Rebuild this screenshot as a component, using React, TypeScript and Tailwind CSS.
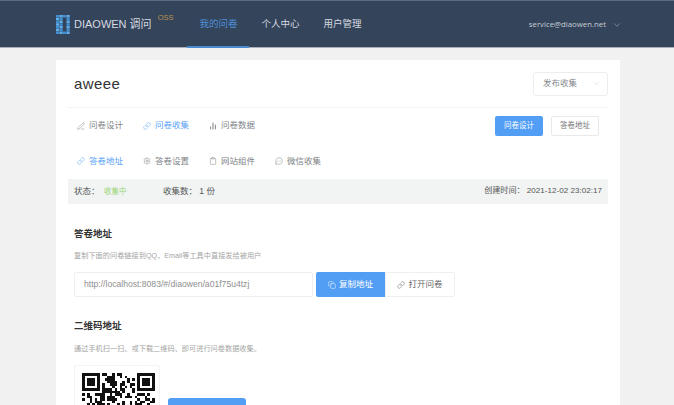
import type { ReactNode } from "react";
import { ChevronDown, Copy, Link, Settings, MessageCircleMore, Clipboard, BarChart2, PenLine } from "lucide-react";

const FONT = "font-['Liberation_Sans','Noto_Sans_CJK_SC',sans-serif]";

// finder pattern positions are fixed, the rest is a deterministic speckle
const QR_SIZE = 29;
function qrCell(x: number, y: number) {
  const inFinder = (fx: number, fy: number) => x >= fx && x < fx + 7 && y >= fy && y < fy + 7;
  const finder = (fx: number, fy: number) => {
    const dx = x - fx;
    const dy = y - fy;
    if (dx === 0 || dx === 6 || dy === 0 || dy === 6) return true;
    return dx >= 2 && dx <= 4 && dy >= 2 && dy <= 4;
  };
  if (inFinder(0, 0)) return finder(0, 0);
  if (inFinder(QR_SIZE - 7, 0)) return finder(QR_SIZE - 7, 0);
  if (inFinder(0, QR_SIZE - 7)) return finder(0, QR_SIZE - 7);
  if (x === 7 && y < 8) return false;
  if (y === 7 && x < 8) return false;
  if (x === QR_SIZE - 8 && y < 8) return false;
  if (y === 7 && x >= QR_SIZE - 8) return false;
  return ((x * 7 + y * 13 + x * y * 3) ^ (x * x + y)) % 5 < 2;
}

function QrCode() {
  const cells: { x: number; y: number }[] = [];
  for (let y = 0; y < QR_SIZE; y++) {
    for (let x = 0; x < QR_SIZE; x++) {
      if (qrCell(x, y)) cells.push({ x, y });
    }
  }
  return (
    <svg width="73" height="73" viewBox={`0 0 ${QR_SIZE} ${QR_SIZE}`} shapeRendering="crispEdges">
      {cells.map((c) => (
        <rect key={`${c.x}-${c.y}`} x={c.x} y={c.y} width="1" height="1" fill="#111" />
      ))}
    </svg>
  );
}

function Logo() {
  const blocks = [
    [0, 0], [1, 0], [2, 0], [3, 0],
    [0, 1], [1, 1], [3, 1],
    [0, 2], [1, 2], [3, 2],
    [0, 3], [1, 3], [3, 3],
    [0, 4], [1, 4], [3, 4],
    [0, 5], [1, 5], [3, 5],
    [0, 6], [1, 6], [2, 6], [3, 6],
  ];
  return (
    <svg width="14" height="19" viewBox="0 0 14 19">
      {blocks.map(([x, y]) => (
        <rect key={`${x}-${y}`} x={x * 3.5} y={y * 2.75} width="3.2" height="2.5" fill={(x + y) % 2 ? "#63ade8" : "#3f90d6"} />
      ))}
    </svg>
  );
}

function NavTab({ label, active }: { label: string; active?: boolean }) {
  return (
    <div
      className={`flex h-[47px] w-[62px] items-center justify-center border-b-2 pt-[2px] text-[9.5px] ${
        active ? "border-[#4a8bd0] text-[#4f8fd8]" : "border-transparent text-[#d5dae0]"
      }`}
    >
      {label}
    </div>
  );
}

function TabItem({ icon, label, active }: { icon: ReactNode; label: string; active?: boolean }) {
  return (
    <div className={`flex items-center gap-[4px] text-[8.5px] ${active ? "text-[#5ba3f5]" : "text-[#808488]"}`}>
      {icon}
      <span>{label}</span>
    </div>
  );
}

export default function App() {
  return (
    <div className={`${FONT} h-[405px] w-[674px] overflow-hidden bg-[#f1f1f1]`}>
      <header className="flex h-[48px] items-start border-t border-b border-t-[#5d6b7e] border-b-[#aab0b8] bg-[#34445a] pl-[56px] pr-[52px]">
        <div className="flex h-[46px] items-center gap-[4px]">
          <Logo />
          <span className="text-[11px] text-[#d5dae0]">DIAOWEN 调问</span>
          <span className="mb-[12px] ml-[2px] text-[7.5px] text-[#b98f4e]">OSS</span>
        </div>
        <nav className="ml-[14px] flex">
          <NavTab label="我的问卷" active />
          <NavTab label="个人中心" />
          <NavTab label="用户管理" />
        </nav>
        <div className="ml-auto flex h-[46px] items-center gap-[6px] pt-[2px] font-['Open_Sans','Noto_Sans_CJK_SC',sans-serif] text-[7.8px] text-[#c6ccd4]">
          service@diaowen.net
          <ChevronDown size={10} strokeWidth={1.2} />
        </div>
      </header>

      <main className="ml-[56px] mt-[12px] h-[400px] w-[564px] bg-white px-[12px]">
        <div className="flex h-[48px] items-center justify-between border-b border-[#f3f3f3] pl-[6px]">
          <h1 className="pt-[2px] text-[15px] tracking-[0.4px] text-[#333]">aweee</h1>
          <div className="flex h-[24px] w-[75px] items-center justify-between rounded-[3px] border border-[#ededed] pl-[9px] pr-[6px] text-[8.5px] text-[#85898e]">
            发布收集
            <ChevronDown size={9} strokeWidth={1.2} className="text-[#c0c4cc]" />
          </div>
        </div>

        <div className="flex h-[35px] items-center justify-between pl-[9px] pr-[9px]">
          <div className="flex items-center gap-[20px]">
            <TabItem icon={<PenLine size={8} strokeWidth={1.5} />} label="问卷设计" />
            <TabItem icon={<Link size={8} strokeWidth={1.5} />} label="问卷收集" active />
            <TabItem icon={<BarChart2 size={8} strokeWidth={3} />} label="问卷数据" />
          </div>
          <div className="flex items-center gap-[8px] text-[7.5px]">
            <button className="flex h-[20px] w-[48px] items-center justify-center rounded-[2px] bg-[#539ef5] text-white">问卷设计</button>
            <button className="flex h-[20px] w-[48px] items-center justify-center rounded-[2px] border border-[#e9e9e9] text-[#777]">答卷地址</button>
          </div>
        </div>

        <div className="flex h-[36px] items-center gap-[20px] pl-[9px]">
          <TabItem icon={<Link size={8} strokeWidth={1.5} />} label="答卷地址" active />
          <TabItem icon={<Settings size={8} strokeWidth={1.5} />} label="答卷设置" />
          <TabItem icon={<Clipboard size={8} strokeWidth={1.5} />} label="网站组件" />
          <TabItem icon={<MessageCircleMore size={8} strokeWidth={1.5} />} label="微信收集" />
        </div>

        <div className="flex h-[25px] items-center justify-between bg-[#f2f4f4] pl-[6px] pr-[6px] text-[8.5px] text-[#555]">
          <div className="flex items-center">
            <span className="w-[30px]">状态：</span>
            <span className="w-[59px] text-[7.5px] text-[#9ad47a]">收集中</span>
            <span>收集数： 1 份</span>
          </div>
          <span className="text-[8.1px]">创建时间： 2021-12-02 23:02:17</span>
        </div>

        <section className="pl-[6px] pt-[23px]">
          <h2 className="text-[9.5px] font-bold leading-[14px] text-[#333]">答卷地址</h2>
          <p className="mt-[10px] text-[7.2px] leading-[10px] text-[#a5a5a5]">复制下面的问卷链接到QQ，Email等工具中直接发给被用户</p>
          <div className="mt-[11px] flex h-[25px] items-stretch">
            <div className="flex w-[239px] items-center rounded-[2px] border border-[#efefef] pl-[9px] text-[8.6px] text-[#8f8f8f]">
              http://localhost:8083/#/diaowen/a01f75u4tzj
            </div>
            <button className="ml-[3px] flex w-[69px] items-center justify-center gap-[3px] rounded-l-[2px] bg-[#539ef5] text-[8.5px] text-white">
              <Copy size={8} strokeWidth={1.5} />
              复制地址
            </button>
            <button className="flex w-[70px] items-center justify-center gap-[3px] rounded-r-[2px] border border-[#efefef] text-[8.5px] text-[#666]">
              <Link size={8} strokeWidth={1.5} />
              打开问卷
            </button>
          </div>
        </section>

        <section className="pl-[6px] pt-[22px]">
          <h2 className="text-[9.5px] font-bold leading-[14px] text-[#333]">二维码地址</h2>
          <p className="mt-[11px] text-[7.2px] leading-[10px] text-[#a5a5a5]">通过手机扫一扫、或下载二维码、即可进行问卷数据收集。</p>
          <div className="mt-[11px] flex items-start">
            <div className="w-[86px] rounded-[2px] border border-[#f3f3f3] pl-[7px] pt-[7px]">
              <QrCode />
            </div>
            <button className="ml-[8px] mt-[33px] h-[25px] w-[78px] rounded-[3px] bg-[#539ef5]" />
          </div>
        </section>
      </main>
    </div>
  );
}
